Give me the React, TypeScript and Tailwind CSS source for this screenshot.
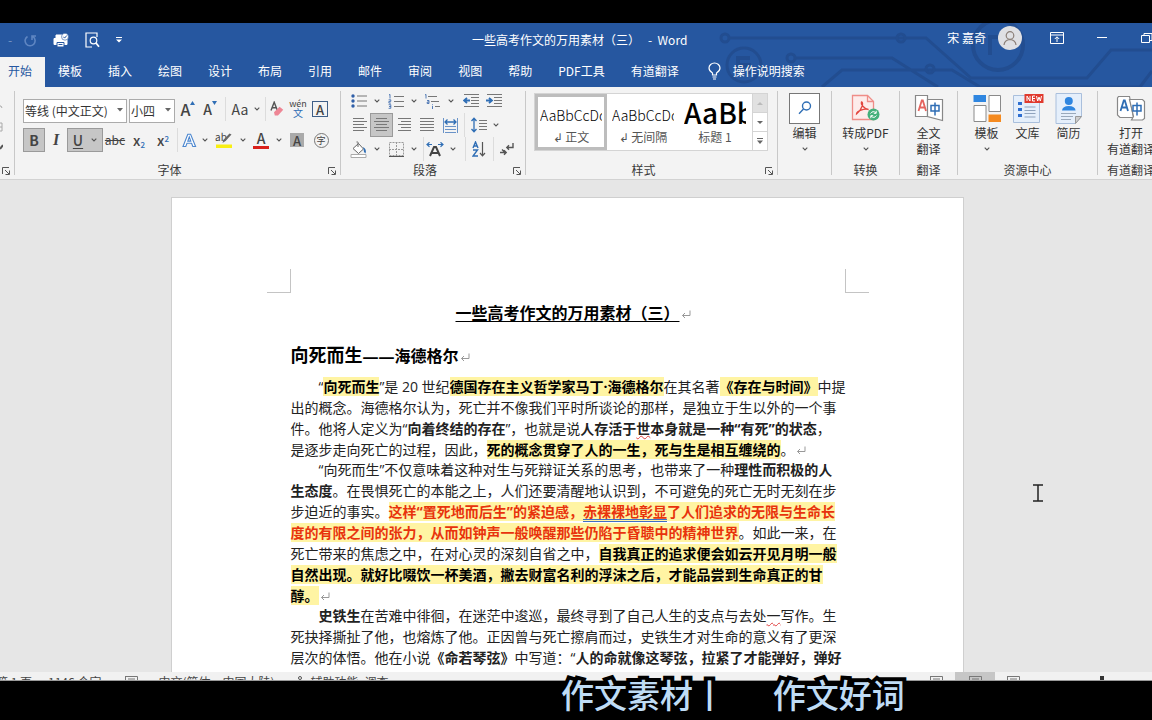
import type { ReactNode } from 'react';

type Kids = { children?: ReactNode };

function Chevron() {
  return (
    <svg width="6" height="4" viewBox="0 0 6 4" fill="none" stroke="#555" strokeWidth="1.1">
      <path d="M0.7 0.7 3 3 5.3 0.7" />
    </svg>
  );
}

function Tool({ label, w = 'w-6', on = false, children }: Kids & { label: string; w?: string; on?: boolean }) {
  return (
    <button
      type="button"
      aria-label={label}
      aria-pressed={on}
      className={`flex h-6 shrink-0 items-center justify-center text-[#444] ${w} ${on ? 'border border-[#9a9a9a] bg-[#c6c6c6]' : ''}`}
    >
      {children}
    </button>
  );
}

function More({ label, w = 'w-4' }: { label: string; w?: string }) {
  return (
    <button type="button" aria-label={label} className={`flex h-6 shrink-0 items-center justify-center ${w}`}>
      <Chevron />
    </button>
  );
}

function Rule({ w = 'w-2' }: { w?: string }) {
  return (
    <span className={`flex h-6 shrink-0 justify-center ${w}`}>
      <span className="h-full w-px bg-[#dcdcdc]" />
    </span>
  );
}

function Group({ name, w, launcher = false, children }: Kids & { name: string; w: string; launcher?: boolean }) {
  return (
    <section
      aria-label={name}
      className={`relative my-1 flex shrink-0 flex-col justify-between border-r border-[#c8c8c8] ${w}`}
    >
      <div>{children}</div>
      <div className={`-mb-[3px] h-4 text-center text-xs leading-4 whitespace-nowrap text-[#3a3a3a] ${launcher ? 'pr-4' : ''}`}>{name}</div>
      {launcher && (
        <button type="button" aria-label={`${name}设置`} className="absolute right-1 bottom-0">
          <svg width="8" height="8" viewBox="0 0 8 8" fill="none" stroke="#555">
            <path d="M.5 7V.5H7M3 3l4 4M7.5 3.5v4h-4" />
          </svg>
        </button>
      )}
    </section>
  );
}

function BigButton({ icon, lines, more = false, w }: { icon: ReactNode; lines: string[]; more?: boolean; w: string }) {
  return (
    <button type="button" className={`flex shrink-0 flex-col items-center text-xs leading-4 whitespace-nowrap text-[#333] ${w}`}>
      <span className="flex h-[34px] items-center">{icon}</span>
      {lines.map((l) => (
        <span key={l}>{l}</span>
      ))}
      {more && (
        <span className="flex h-4 items-center">
          <Chevron />
        </span>
      )}
    </button>
  );
}

function Lines({ rows }: { rows: [number, number][] }) {
  return (
    <svg width="15" height="16" viewBox="0 0 15 16" stroke="#777" strokeWidth="1">
      {rows.map(([a, b], i) => (
        <path key={i} d={`M${a} ${1.5 + i * 3}H${b}`} />
      ))}
    </svg>
  );
}

function Indent({ flip = false }: { flip?: boolean }) {
  return (
    <svg width="16" height="14" viewBox="0 0 16 14" fill="none">
      <path d="M1 .5h15M8 3.5h8M8 6.5h8M8 9.5h8M1 12.5h15" stroke="#777" />
      <path d={flip ? 'M0 6.5h5M3 3.8 6 6.5 3 9.2' : 'M7 6.5H2M4 3.8 1 6.5 4 9.2'} stroke="#2f6eb5" strokeWidth="1.8" />
    </svg>
  );
}

function Combo({ label, value, w }: { label: string; value: string; w: string }) {
  return (
    <label className={`relative block h-6 shrink-0 ${w}`}>
      <span className="sr-only">{label}</span>
      <select
        defaultValue={value}
        className="h-6 w-full appearance-none border border-[#ababab] bg-white pl-px text-xs leading-5 text-[#333]"
      >
        <option>{value}</option>
      </select>
      <svg width="6" height="4" viewBox="0 0 6 4" className="pointer-events-none absolute top-[11px] right-1">
        <path d="M0 0h6L3 3.5z" fill="#666" />
      </svg>
    </label>
  );
}

function FontGroup() {
  return (
    <Group name="字体" w="w-[326px]" launcher>
      <div className="flex items-center gap-[2px] pt-[6px] pl-2">
        <Combo label="字体" value="等线 (中文正文)" w="w-[104px]" />
        <Combo label="字号" value="小四" w="w-[46px]" />
        <div className="flex">
          <Tool label="增大字号" w="w-[22px]">
            <span className="text-base font-medium">A</span>
            <svg width="5" height="4" viewBox="0 0 5 4" className="mb-3"><path d="M0 4 2.5 0 5 4z" fill="#2f6eb5" /></svg>
          </Tool>
          <Tool label="减小字号" w="w-[22px]">
            <span className="text-sm font-medium">A</span>
            <svg width="5" height="4" viewBox="0 0 5 4" className="mb-3"><path d="M0 0 2.5 4 5 0z" fill="#2f6eb5" /></svg>
          </Tool>
          <Rule />
          <Tool label="更改大小写" w="w-[22px]"><span className="text-sm">Aa</span></Tool>
          <More label="大小写选项" w="w-3" />
          <Rule w="w-1" />
          <Tool label="清除格式" w="w-5">
            <svg width="14" height="16" viewBox="0 0 14 16" fill="none">
              <path d="M1 9.5 4.2 1.2 7.4 9.5M2.2 6.7h4" stroke="#555" strokeWidth="1.4" />
              <path d="m4 11.2 5.6-5.4 3.6 3L8 14.4l-3.2.2z" fill="#ee8695" />
            </svg>
          </Tool>
          <Tool label="拼音指南" w="w-[22px]">
            <span className="flex flex-col items-center">
              <span className="text-[9px] leading-[7px]">wén</span>
              <span className="text-[10px] leading-[11px] text-[#2f6eb5]">文</span>
            </span>
          </Tool>
          <Tool label="字符边框" w="w-[22px]">
            <span className="flex size-4 items-center justify-center border border-[#3f5f88] text-[13px] leading-none font-medium">A</span>
          </Tool>
        </div>
      </div>
      <div className="flex items-center pt-[7px] pl-2">
        <Tool label="加粗" w="w-[22px]" on><span className="text-sm font-bold">B</span></Tool>
        <Tool label="倾斜" w="w-[22px]"><span className="font-['Liberation_Serif'] text-base font-bold italic">I</span></Tool>
        <div className="flex h-6 w-9 items-center border border-[#9a9a9a] bg-[#c6c6c6]">
          <Tool label="下划线" w="w-5"><span className="text-sm font-medium underline underline-offset-2">U</span></Tool>
          <More label="下划线选项" w="w-3" />
        </div>
        <Tool label="删除线"><span className="text-xs line-through">abc</span></Tool>
        <Tool label="下标"><span className="text-sm font-medium">x<sub className="text-[8px] text-[#2f6eb5]">2</sub></span></Tool>
        <Tool label="上标"><span className="text-sm font-medium">x<sup className="text-[8px] text-[#2f6eb5]">2</sup></span></Tool>
        <Rule w="w-1" />
        <Tool label="文本效果" w="w-5">
          <svg width="15" height="15" viewBox="0 0 15 15" fill="#fff" stroke="#4b86cf" strokeWidth="1.1">
            <path d="M1 13.5 5.8 1.2h2.8l5 12.3h-2.8l-1.2-3.2H5l-1.2 3.2zM5.8 8.1h3L7.3 3.8z" />
          </svg>
        </Tool>
        <More label="文本效果选项" w="w-3" />
        <Tool label="突出显示" w="w-[26px]">
          <svg width="18" height="18" viewBox="0 0 18 18">
            <path d="M1 13.5h16V17H1z" fill="#f8ef12" />
            <text x="0" y="10" fontSize="10" fill="#444">ab</text>
            <path d="m16.5 3.500-6 6.500-3 2 1-3.300 6-6.200z" fill="#666" />
          </svg>
        </Tool>
        <More label="突出显示选项" w="w-3" />
        <Tool label="字体颜色">
          <span className="flex h-[18px] w-4 items-start justify-center border-b-[3px] border-[#d9201a] text-sm leading-[15px] font-medium">A</span>
        </Tool>
        <More label="字体颜色选项" w="w-3" />
        <Tool label="字符底纹">
          <span className="flex size-[14px] items-center justify-center bg-[#aaa] text-[13px] leading-none font-medium">A</span>
        </Tool>
        <Tool label="带圈字符">
          <span className="flex size-[15px] items-center justify-center rounded-full border border-[#777] text-[9px] leading-none">字</span>
        </Tool>
      </div>
    </Group>
  );
}

function ParagraphGroup() {
  return (
    <Group name="段落" w="w-[185px]" launcher>
      <div className="-mt-[2px] flex pl-2">
        <Tool label="项目符号" w="w-5">
          <svg width="16" height="14" viewBox="0 0 16 14">
            <path d="M6 2h10M6 7h10M6 12h10" stroke="#777" />
            <g fill="#2f5fa8"><circle cx="2" cy="2" r="1.7" /><circle cx="2" cy="7" r="1.7" /><circle cx="2" cy="12" r="1.7" /></g>
          </svg>
        </Tool>
        <More label="项目符号选项" />
        <Tool label="编号" w="w-[22px]">
          <svg width="16" height="15" viewBox="0 0 16 15" fill="none">
            <path d="M6 2.5h10M6 7.500h10M6 12.500h10" stroke="#777" />
            <path d="M1 1l1-.6V4.500M.6 5.800h2.200v1.600H.9v1.700h2M.6 10.700h2.200v3.600H.6M1 12.500h1.800" stroke="#2f5fa8" strokeWidth=".8" />
          </svg>
        </Tool>
        <More label="编号选项" w="w-[14px]" />
        <Tool label="多级列表" w="w-[22px]">
          <svg width="16" height="15" viewBox="0 0 16 15" fill="none">
            <path d="M4 2.500h9M7 7.500h8M11 12.500h5" stroke="#777" />
            <path d="M1 1l1-.6V4.500M3 6.500h2v3H3.200V8H5M8.500 12v3M8.500 10.300v.9" stroke="#2f5fa8" strokeWidth=".8" />
          </svg>
        </Tool>
        <More label="多级列表选项" />
        <Tool label="减少缩进"><Indent /></Tool>
        <Tool label="增加缩进" w="w-[22px]"><Indent flip /></Tool>
      </div>
      <div className="flex pl-[7px]">
        <Tool label="左对齐" w="w-[22px]"><Lines rows={[[1, 12], [1, 15], [1, 12], [1, 15], [1, 12]]} /></Tool>
        <Tool label="居中" w="w-[23px]" on><Lines rows={[[2, 13], [0, 15], [2, 13], [0, 15], [2, 13]]} /></Tool>
        <Tool label="右对齐" w="w-[23px]"><Lines rows={[[1, 14], [4, 14], [1, 14], [4, 14], [1, 14]]} /></Tool>
        <Tool label="两端对齐" w="w-[23px]"><Lines rows={[[0, 14], [0, 14], [0, 14], [0, 14], [0, 14]]} /></Tool>
        <Tool label="分散对齐" w="w-[23px]">
          <svg width="15" height="15" viewBox="0 0 15 15" fill="none">
            <path d="M.5 0v15M14.500 0v15" stroke="#6a93c8" />
            <path d="M2 8.500h11M2 11.500h11M2 14.500h11" stroke="#6a93c8" />
            <path d="M2 4h11M4.500 1.500 2 4l2.500 2.500M10.500 1.500 13 4l-2.500 2.500" stroke="#2f6eb5" strokeWidth="1.300" />
          </svg>
        </Tool>
        <Rule w="w-1" />
        <Tool label="行距" w="w-[26px]">
          <svg width="16" height="16" viewBox="0 0 16 16" fill="none">
            <path d="M3 1v14M.5 4 3 1.200 5.500 4M.5 12 3 14.800 5.500 12" stroke="#2f6eb5" strokeWidth="1.300" />
            <path d="M8 3.500h8M8 6.500h8M8 9.500h8M8 12.500h8" stroke="#777" />
          </svg>
        </Tool>
        <More label="行距选项" w="w-2" />
      </div>
      <div className="flex pl-2">
        <Tool label="底纹" w="w-5">
          <svg width="18" height="17" viewBox="0 0 18 17" fill="none">
            <path d="M3 7.500 8.500 2.500l5 5.500-5 4.500z" fill="#fff" stroke="#666" />
            <path d="M8 6V1.500Q8 .5 6.500 1" stroke="#666" />
            <path d="M13 6q4 2 2.500 6.500-2-1-2-4.500z" fill="#2f6eb5" />
            <path d="M1 13.500h15v3H1z" fill="#fff" stroke="#aaa" />
          </svg>
        </Tool>
        <More label="底纹选项" />
        <Tool label="边框" w="w-[22px]">
          <svg width="15" height="15" viewBox="0 0 15 15" fill="none" stroke="#999">
            <path d="M.5.5h14v13H.5zM7.500 0v14M0 7.500h15" strokeDasharray="2 1" />
            <path d="M0 14.500h15" stroke="#555" />
          </svg>
        </Tool>
        <More label="边框选项" w="w-[14px]" />
        <Rule w="w-1" />
        <Tool label="中文版式" w="w-5">
          <svg width="18" height="15" viewBox="0 0 18 15" fill="none">
            <path d="m4 14 4-9h2l4 9M5.500 11h7" stroke="#444" strokeWidth="2" />
            <path d="M1 2.500h5M3.500.3 1 2.500l2.500 2.200M12 2.500h5M14.500.3 17 2.500l-2.500 2.200" stroke="#2f6eb5" strokeWidth="1.200" />
          </svg>
        </Tool>
        <More label="中文版式选项" w="w-4" />
        <Rule />
        <Tool label="排序" w="w-5">
          <svg width="14" height="16" viewBox="0 0 14 16" fill="none">
            <path d="m1 7 2.500-6L6 7M1.800 5h3.400M1 9h4.500L1 15h5" stroke="#2f6eb5" strokeWidth="1.400" />
            <path d="M10.500 1v13.500M8 12l2.500 2.800L13 12" stroke="#555" strokeWidth="1.200" />
          </svg>
        </Tool>
        <Rule />
        <Tool label="显示编辑标记" w="w-5">
          <svg width="14" height="14" viewBox="0 0 14 14" fill="none" stroke="#555" strokeWidth="1.400">
            <path d="M13 1v4.500H7M9 3.300 6.800 5.500 9 7.700M0 10.500h6M4 8.300l2.200 2.200L4 12.700M2 7.500l2 2" />
          </svg>
        </Tool>
      </div>
    </Group>
  );
}

function StyleCard({ sample, name, big = false, on = false }: { sample: string; name: string; big?: boolean; on?: boolean }) {
  return (
    <button
      type="button"
      className={`flex h-14 w-[72px] shrink-0 flex-col justify-end overflow-hidden border-[3px] px-[2px] ${on ? 'border-[#bdbdbd]' : 'border-transparent'}`}
    >
      <span
        className={`flex w-full items-center overflow-hidden whitespace-nowrap text-black ${big ? 'h-8 text-[28px] font-medium' : 'h-6 text-sm font-light'}`}
      >
        {sample}
      </span>
      <span className="w-full text-center text-xs leading-5 text-[#555]">{name}</span>
    </button>
  );
}

function StylesGroup() {
  return (
    <Group name="样式" w="w-[252px]" launcher>
      <div className="mt-[2px] ml-2 flex w-[234px] border border-[#d4d4d4] bg-white">
        <StyleCard sample="AaBbCcDd" name="↲ 正文" on />
        <StyleCard sample="AaBbCcDd" name="↲ 无间隔" />
        <StyleCard sample="AaBb" name="标题 1" big />
        <div className="ml-auto flex w-[15px] flex-col border-l border-[#d4d4d4]">
          <button type="button" aria-label="上一行" className="flex flex-1 items-center justify-center bg-[#e1e1e1]">
            <svg width="6" height="3" viewBox="0 0 6 3"><path d="M0 3h6L3 0z" fill="#bbb" /></svg>
          </button>
          <button type="button" aria-label="下一行" className="flex flex-1 items-center justify-center border-y border-[#d4d4d4]">
            <svg width="6" height="3" viewBox="0 0 6 3"><path d="M0 0h6L3 3z" fill="#666" /></svg>
          </button>
          <button type="button" aria-label="其他样式" className="flex flex-1 items-center justify-center">
            <svg width="6" height="6" viewBox="0 0 6 6"><path d="M0 0h6v1H0zM0 2.500h6L3 6z" fill="#666" /></svg>
          </button>
        </div>
      </div>
    </Group>
  );
}

const searchIcon = (
  <span className="flex size-[31px] items-center justify-center border border-[#777] bg-white">
    <svg width="14" height="14" viewBox="0 0 14 14" fill="none" stroke="#2f6eb5" strokeWidth="1.400">
      <circle cx="8.500" cy="5" r="4" />
      <path d="M5.500 8 1 12.800" />
    </svg>
  </span>
);

const pdfIcon = (
  <svg width="30" height="28" viewBox="0 0 30 28" fill="none">
    <path d="M1.500 1.500h15l6 6v18h-21z" fill="#fdeceb" stroke="#ef8d88" strokeWidth="1.300" />
    <path d="M16.500 1.500v6h6" stroke="#ef8d88" strokeWidth="1.300" />
    <path d="M10.500 8c2.500 0 .5 8-5 12 0-3 8-6 12-4.500-4-.5-8-5-7-7.500z" stroke="#e2463f" strokeWidth="1.300" />
    <circle cx="22.500" cy="20.500" r="6" fill="#45b07c" />
    <path d="M19.500 19.500q2.500-3.500 5.500-.5M25.500 21.500q-2.500 3.500-5.500.5M25.200 16.800v2.500h-2.400M19.800 24.200v-2.500h2.400" stroke="#fff" />
  </svg>
);

function TranslateIcon({ blue = false }: { blue?: boolean }) {
  const ink = blue ? '#2f6eb5' : '#e5655f';
  return (
    <svg width="30" height="28" viewBox="0 0 30 28" fill="none">
      <path d={blue ? 'M2.500 2.500h11l4 21H4L1.500 21V4z' : 'M1.500 1.500h12v21h-12z'} fill="#fff" stroke="#888" strokeWidth="1.200" />
      <path d={blue ? 'M13.500 5.500h13l2 2v17l-2 1.500h-11l2-3.500z' : 'M13.500 5.500h15v21l-15-4z'} fill="#fff" stroke="#888" strokeWidth="1.200" />
      <path d="m4.500 17 3.300-10.500h1L12 17M5.700 13.500h5" stroke={ink} strokeWidth="1.800" />
      <path d="M17 11.500h8v5.500h-8zM21 8.500v13" stroke="#2f6eb5" strokeWidth="1.500" />
    </svg>
  );
}

const templateIcon = (
  <svg width="28" height="29" viewBox="0 0 28 29" fill="none">
    <path d="M.5 1h12.500v7H.5z" fill="#2f86e0" />
    <path d="M1 11.500h12v16H1zM16 1.500h11.500v16H16z" fill="#fff" stroke="#8a8a8a" />
    <path d="M15.500 20.500H28v7.500H15.500z" fill="#f58a1f" />
  </svg>
);

const libraryIcon = (
  <svg width="32" height="31" viewBox="0 0 32 31" fill="none">
    <path d="M1.500 2.500h26v27h-26z" fill="#e5effb" stroke="#a9bfdc" />
    <path d="M6 9h4v3H6zM6 15h4v3H6zM6 21h4v3H6z" fill="#2f6fd0" />
    <path d="M12.500 14h11M12.500 17.500h11M12.500 20.500h11M12.500 24h11" stroke="#8fa3bd" />
    <path d="M12.500 1h19v9h-19z" fill="#e03a2e" />
    <path d="M15 8V3l3 5V3M23 3h-2.500v5H23M20.500 5.500H23M24.500 3l1.200 5 1.300-4 1.300 4 1.200-5" stroke="#fff" />
  </svg>
);

const resumeIcon = (
  <svg width="28" height="31" viewBox="0 0 28 31" fill="none">
    <path d="M1 .5h25.500v23l-6 7H1z" fill="#e5effb" stroke="#a9bfdc" />
    <path d="M20.500 30.500v-7h6z" fill="#cfcfcf" stroke="#999" />
    <circle cx="13.800" cy="8" r="4" fill="#2f86e0" />
    <path d="M7 17.500q.5-4.500 6.800-4.500t6.800 4.500z" fill="#2f86e0" />
    <path d="M6 20.500h15M6 23.500h12M6 26.500h10" stroke="#9aa9bb" />
  </svg>
);

function Ribbon() {
  return (
    <div className="flex h-[93px] shrink-0 overflow-hidden border-b border-[#d2d2d2] bg-[#f3f3f3]">
      <div className="relative my-1 w-[15px] shrink-0 border-r border-[#c8c8c8]">
        <svg width="3" height="60" viewBox="0 0 3 60" className="absolute top-3 left-0" fill="none" stroke="#aaa">
          <path d="M0 3h1l1 2M0 20h2v8H0M0 24h2" />
          <path d="M0 46l3-4" stroke="#555" strokeWidth="2" />
        </svg>
        <button type="button" aria-label="剪贴板设置" className="absolute right-1 bottom-0">
          <svg width="8" height="8" viewBox="0 0 8 8" fill="none" stroke="#555"><path d="M.5 7V.5H7M3 3l4 4M7.500 3.500v4h-4" /></svg>
        </button>
      </div>
      <FontGroup />
      <ParagraphGroup />
      <StylesGroup />
      <Group name="" w="w-[54px]">
        <BigButton icon={searchIcon} lines={['编辑']} more w="w-full" />
      </Group>
      <Group name="转换" w="w-[68px]">
        <BigButton icon={pdfIcon} lines={['转成PDF']} more w="w-full" />
      </Group>
      <Group name="翻译" w="w-[58px]">
        <BigButton icon={<TranslateIcon />} lines={['全文', '翻译']} w="w-full" />
      </Group>
      <Group name="资源中心" w="w-[140px]">
        <div className="flex pl-2">
          <BigButton icon={templateIcon} lines={['模板']} more w="w-[41px]" />
          <BigButton icon={libraryIcon} lines={['文库']} w="w-[41px]" />
          <BigButton icon={resumeIcon} lines={['简历']} w="w-[41px]" />
        </div>
      </Group>
      <Group name="有道翻译" w="w-[67px]">
        <BigButton icon={<TranslateIcon blue />} lines={['打开', '有道翻译']} w="w-full" />
      </Group>
    </div>
  );
}

const tabs = ['模板', '插入', '绘图', '设计', '布局', '引用', '邮件', '审阅', '视图', '帮助', 'PDF工具', '有道翻译'];

function Header() {
  return (
    <header className="relative shrink-0 overflow-hidden bg-[#2657a0] text-xs text-white">
      <svg width="440" height="64" viewBox="0 0 440 64" fill="none" stroke="#224d90" strokeWidth="3" className="absolute top-0 right-0">
        <circle cx="13" cy="15" r="4" />
        <path d="M17 15h197l45 40h116l24-28h41M83 35h97l46 29M110 64l20-17h110l28 17h160l12-16" />
        <circle cx="79" cy="35" r="4" />
        <circle cx="189" cy="15" r="4" />
        <circle cx="218" cy="46" r="4" />
        <circle cx="32" cy="42" r="17" />
        <path d="M26 50V35h12M27 42h10v9" strokeWidth="4" />
        <circle cx="286" cy="22" r="25" strokeWidth="4" />
        <path d="M278 32V14h10" strokeWidth="4" />
      </svg>
      <div className="relative flex h-[34px] items-center">
        <div className="flex flex-1 items-center gap-4 pl-2">
          <span className="w-0 text-white/40">-</span>
          <button type="button" aria-label="重做" className="text-[#5f86c2]">
            <svg width="13" height="13" viewBox="0 0 13 13" fill="none" stroke="currentColor" strokeWidth="1.600">
              <path d="M3.500 2.500a5 5 0 1 0 5.500.2M8 6V2h4" />
            </svg>
          </button>
          <button type="button" aria-label="快速打印">
            <svg width="16" height="15" viewBox="0 0 16 15">
              <path d="M3 5V2h6v3M1 5.500h13v6H1z" fill="#fff" stroke="#fff" />
              <path d="M4 9.500h7V14H4z" fill="#fff" stroke="#2657a0" />
              <path d="M5.500 11.500h4" stroke="#2657a0" />
              <circle cx="12" cy="3.700" r="3.500" fill="#fff" stroke="#2657a0" strokeWidth=".6" />
              <path d="m10.300 3.700 1.300 1.400 2.200-2.600" fill="none" stroke="#2657a0" />
            </svg>
          </button>
          <button type="button" aria-label="打印预览">
            <svg width="15" height="16" viewBox="0 0 15 16" fill="none" stroke="#fff" strokeWidth="1.200">
              <path d="M12 5V1H1v14h6" />
              <circle cx="8.500" cy="8.500" r="3.300" />
              <path d="m10.800 10.800 3.200 4" strokeWidth="1.800" />
            </svg>
          </button>
          <button type="button" aria-label="自定义快速访问工具栏">
            <svg width="6" height="6" viewBox="0 0 6 6" fill="#fff"><path d="M0 0h6v1H0zM0 2.500h6L3 5.500z" /></svg>
          </button>
        </div>
        <h1 className="whitespace-pre">一些高考作文的万用素材（三）   -  Word </h1>
        <div className="-mt-1 -mr-[2px] flex flex-1 items-center justify-end">
          <span>宋 嘉奇</span>
          <span className="ml-3 flex size-6 items-center justify-center rounded-full bg-[#dfe0e4]">
            <svg width="16" height="16" viewBox="0 0 16 16" fill="none" stroke="#8b7f78" strokeWidth="1.200">
              <circle cx="8" cy="5.500" r="3.800" />
              <path d="M2 15q.5-5 6-5.500 5.500.5 6 5.500" />
            </svg>
          </span>
          <button type="button" aria-label="功能区显示选项" className="ml-7">
            <svg width="14" height="12" viewBox="0 0 14 12" fill="none" stroke="#fff"><path d="M.5.5h13v11H.5zM.5 3h13M7 10V5M4.800 7 7 4.800 9.200 7" /></svg>
          </button>
          <button type="button" aria-label="最小化" className="ml-8">
            <svg width="12" height="12" viewBox="0 0 12 12" stroke="#fff"><path d="M1 5.500h10" /></svg>
          </button>
          <button type="button" aria-label="还原" className="ml-8">
            <svg width="14" height="12" viewBox="0 0 14 12" fill="none" stroke="#fff"><path d="M1.500 3.500h8v7h-8zM4 3.500v-2h8v7H9.500" /></svg>
          </button>
        </div>
      </div>
      <nav className="relative flex h-[30px] leading-[28px]">
        <a href="#home" className="w-[45px] bg-[#f3f3f3] pl-2 text-[#2657a0]">开始</a>
        {tabs.map((t) => (
          <a key={t} href={`#${t}`} className="shrink-0 px-[13px]">{t}</a>
        ))}
        <a href="#tell-me" className="flex items-center gap-3 pb-[2px] pl-4">
          <svg width="13" height="18" viewBox="0 0 13 18" fill="none" stroke="#fff" strokeWidth="1.200">
            <path d="M4.500 13V11Q1 9 1 6a5.500 5 0 0 1 11 0q0 3-3.500 5v2zM4.500 15h4M5 17h3" />
          </svg>
          操作说明搜索
        </a>
      </nav>
    </header>
  );
}

function B({ children }: Kids) {
  return <b className="font-bold">{children}</b>;
}
function Hl({ children }: Kids) {
  return <mark className="bg-[#fff4a3] font-bold text-black">{children}</mark>;
}
function Red({ children }: Kids) {
  return <mark className="bg-[#fff4a3] font-bold text-[#e8330c]">{children}</mark>;
}
function Mark() {
  return (
    <svg width="10" height="9" viewBox="0 0 10 9" fill="none" stroke="#999" className="ml-px inline-block align-baseline">
      <path d="M9 .5v5H1.500M4 3 1.500 5.500 4 8" />
    </svg>
  );
}

function Page() {
  return (
    <article className="relative mx-auto mt-[17px] w-[793px] shrink-0 border border-[#cfcfcf] bg-white pt-[101px] pr-[117px] pl-[119px] font-['Open_Sans','Noto_Sans_CJK_SC',sans-serif] text-sm leading-[21px] whitespace-nowrap text-[#222]">
      <span className="absolute top-[71px] left-[95px] size-6 border-r border-b border-[#c4c4c4]" />
      <span className="absolute top-[71px] right-[94px] size-6 border-b border-l border-[#c4c4c4]" />
      <h2 className="pl-[10px] text-center text-base leading-7 font-bold text-black">
        <span className="underline underline-offset-2">一些高考作文的万用素材（三）</span>
        <Mark />
      </h2>
      <h3 className="mt-[14px] mb-[6px] text-base leading-7 font-bold text-black">
        <span className="text-lg leading-7">向死而生</span>——海德格尔
        <Mark />
      </h3>
      <p className="indent-[28px]">
        “<Hl>向死而生</Hl>”是 20 世纪<Hl>德国存在主义哲学家马丁·海德格尔</Hl>在其名著<Hl>《存在与时间》</Hl>中提<br />
        出的概念。海德格尔认为，死亡并不像我们平时所谈论的那样，是独立于生以外的一个事<br />
        件。他将人定义为“<B>向着终结的存在</B>”，也就是说<B>人存活于<span className="underline decoration-[#e04040] decoration-wavy decoration-1">世</span>本身就是一种“有死”的状态</B>，<br />
        是逐步走向死亡的过程，因此，<Hl>死的概念贯穿了人的一生，死与生是相互缠绕的</Hl>。<Mark />
      </p>
      <p className="-mt-px indent-[28px]">
        “向死而生”不仅意味着这种对生与死辩证关系的思考，也带来了一种<B>理性而积极的人</B><br />
        <B>生态度</B>。在畏惧死亡的本能之上，人们还要清醒地认识到，不可避免的死亡无时无刻在步<br />
        步迫近的事实。<Red>这样“置死地而后生”的紧迫感，<span className="underline decoration-[#3f6fc0] decoration-double decoration-1 underline-offset-2">赤裸裸地彰显</span>了人们追求的无限与生命长</Red><br />
        <Red>度的有限之间的张力，从而如钟声一般唤醒那些仍陷于昏聩中的精神世界</Red>。如此一来，在<br />
        死亡带来的焦虑之中，在对心灵的深刻自省之中，<Hl>自我真正的追求便会如云开见月明一般</Hl><br />
        <Hl>自然出现。就好比啜饮一杯美酒，撇去财富名利的浮沫之后，才能品尝到生命真正的甘</Hl><br />
        <Hl>醇。</Hl><Mark />
      </p>
      <p className="-mt-px indent-[28px]">
        <B>史铁生</B>在苦难中徘徊，在迷茫中逡巡，最终寻到了自己人生的支点与去处<span className="underline decoration-[#e04040] decoration-wavy decoration-1">一</span>写作。生<br />
        死抉择撕扯了他，也熔炼了他。正因曾与死亡擦肩而过，史铁生才对生命的意义有了更深<br />
        层次的体悟。他在小说<B>《命若琴弦》</B>中写道：“<B>人的命就像这琴弦，拉紧了才能弹好，弹好</B><br />
        <B>了就够了。</B>”在他的笔下，死亡不再是终点，而是生命中必然降临的节日，他以豁达面对
      </p>
    </article>
  );
}

function ViewIcon() {
  return (
    <svg width="13" height="10" viewBox="0 0 13 10" fill="none" stroke="#777" className="shrink-0">
      <path d="M.5.5h12V10M.5 0v10M3 3h7" />
    </svg>
  );
}

export default function App() {
  return (
    <div className="flex h-screen w-full flex-col overflow-hidden bg-black font-['Noto_Sans_CJK_SC',sans-serif]">
      <div className="h-[23px] shrink-0" />
      <Header />
      <Ribbon />
      <main className="relative min-h-0 flex-1 overflow-hidden bg-[#e6e6e6] pr-[18px]">
        <Page />
        <svg width="12" height="18" viewBox="0 0 12 18" fill="none" stroke="#222" strokeWidth="1.500" className="absolute top-[304px] right-[108px]">
          <path d="M1 1h10M1 17h10M6 1v16" />
        </svg>
      </main>
      <footer className="flex h-[9px] shrink-0 items-start overflow-hidden border-b border-[#999] bg-[#f1f1f1] pt-1 text-xs leading-3 whitespace-pre text-[#444]">
        <span className="-ml-1">第 1 页</span>
        <span className="ml-4">1146 个字</span>
        <span className="ml-6"><ViewIcon /></span>
        <span className="ml-5">中文(简体，中国大陆)</span>
        <span className="ml-5 flex gap-1">
          <svg width="12" height="12" viewBox="0 0 12 12" fill="none" stroke="#555"><circle cx="5" cy="2" r="1.500" /><path d="M1 4.500h8" /></svg>
          辅助功能: 调查
        </span>
        <span className="ml-auto flex items-start">
          <ViewIcon />
          <span className="-mt-1 mr-3 ml-3 flex w-10 justify-center bg-[#c6c6c6] pt-1 pb-2"><ViewIcon /></span>
          <ViewIcon />
          <span className="mr-12 ml-20 h-3 w-1 bg-[#333]" />
        </span>
      </footer>
      <div className="relative h-[39px] shrink-0">
        <p className="absolute -top-3 left-[calc(50%-15px)] text-[33px] leading-[50px] font-medium whitespace-pre text-[#bfdcf5] [-webkit-text-stroke:8px_black] [paint-order:stroke_fill]">作文素材丨  <span className="pl-8">作文好词</span></p>
      </div>
    </div>
  );
}
